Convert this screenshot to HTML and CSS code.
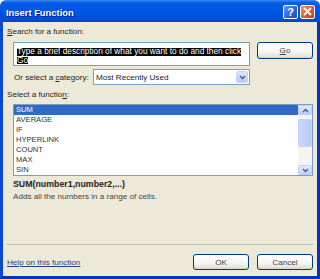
FILE: index.html
```html
<!DOCTYPE html>
<html lang="en">
<head>
  <meta charset="UTF-8" />
  <meta name="viewport" content="width=device-width, initial-scale=1" />
  <title>Insert Function</title>
  <link rel="stylesheet" href="styles.css">
</head>
<body>
  <div class="window">
    <div class="titlebar">
      <span class="title">Insert Function</span>
      <div class="caption-buttons">
        <span class="cap-btn help">?</span>
        <span class="cap-btn close">
          <svg width="9" height="9" viewBox="0 0 9 9"><path d="M1 1 L8 8 M8 1 L1 8" stroke="#fff" stroke-width="1.8" /></svg>
        </span>
      </div>
    </div>

    <div class="frame">
      <div class="label"><u>S</u>earch for a function:</div>

      <div class="search-row">
        <div class="search-box">
          <span class="selected">Type a brief description of what you want to do and then click</span><br>
          <span class="selected">Go</span>
        </div>
        <div class="button go"><u>G</u>o</div>
      </div>

      <div class="category-row">
        <span class="cat-label">Or select a <u>c</u>ategory:</span>
        <div class="select">
          <span class="select-text">Most Recently Used</span>
          <span class="drop">
            <svg width="7" height="5" viewBox="0 0 7 5"><path d="M1 1 L3.5 3.5 L6 1" fill="none" stroke="#4d6185" stroke-width="1.5" /></svg>
          </span>
        </div>
      </div>

      <div class="label">Select a functio<u>n</u>:</div>

      <div class="listbox">
        <ul class="items">
          <li class="active">SUM</li>
          <li>AVERAGE</li>
          <li>IF</li>
          <li>HYPERLINK</li>
          <li>COUNT</li>
          <li>MAX</li>
          <li>SIN</li>
        </ul>
        <div class="scrollbar">
          <span class="arrow">
            <svg width="7" height="5" viewBox="0 0 7 5"><path d="M1 4 L3.5 1.5 L6 4" fill="none" stroke="#4d6185" stroke-width="1.5" /></svg>
          </span>
          <span class="track"><span class="thumb"></span></span>
          <span class="arrow">
            <svg width="7" height="5" viewBox="0 0 7 5"><path d="M1 1 L3.5 3.5 L6 1" fill="none" stroke="#4d6185" stroke-width="1.5" /></svg>
          </span>
        </div>
      </div>

      <div class="signature">SUM(number1,number2,...)</div>
      <div class="description">Adds all the numbers in a range of cells.</div>

      <div class="spacer"></div>
      <div class="separator"></div>

      <div class="footer">
        <a class="help-link" href="#">Help on this function</a>
        <div class="buttons">
          <div class="button">OK</div>
          <div class="button">Cancel</div>
        </div>
      </div>
    </div>
  </div>
</body>
</html>
```

FILE: styles.css
```css
html, body {
  margin: 0;
  padding: 0;
  background: #fff;
}

body {
  font-family: 'Liberation Sans', Arial, sans-serif;
  font-size: 8.1px;
  color: #000;
}

.window {
  width: 320px;
  height: 279px;
  display: flex;
  flex-direction: column;
}

/* title bar */
.titlebar {
  height: 22px;
  flex: none;
  display: flex;
  align-items: center;
  justify-content: space-between;
  padding: 0 5px 0 6px;
  box-sizing: border-box;
  border-radius: 6px 6px 0 0;
  background: linear-gradient(#3d8cf5 0%, #0a5ee6 12%, #0058e6 30%, #0054e3 60%, #004ed8 85%, #0045c5 100%);
}

.title {
  color: #fff;
  font-weight: bold;
  font-size: 9.4px;
  padding-top: 2px;
  text-shadow: 1px 1px 0 #0a1a8a;
}

.caption-buttons {
  display: flex;
  gap: 2px;
  padding-top: 1px;
}

.cap-btn {
  width: 15px;
  height: 14px;
  box-sizing: border-box;
  border: 1px solid #fff;
  border-radius: 2px;
  display: flex;
  align-items: center;
  justify-content: center;
  color: #fff;
  font-weight: bold;
  font-size: 11px;
}

.help {
  background: linear-gradient(135deg, #5f95f8, #2a62e0 60%, #1d4fcf);
}

.close {
  background: linear-gradient(135deg, #f0926e, #e25a2e 55%, #c8401b);
}

/* dialog body */
.frame {
  flex: 1;
  display: flex;
  flex-direction: column;
  background: #ece9d8;
  border-left: 3px solid #0a49d8;
  border-right: 3px solid #0833b8;
  border-bottom: 3px solid #0833b8;
  padding: 0 4px 6px 4px;
}

.label {
  line-height: 10px;
  margin-top: 5px;
  color: #222;
}

.label + .listbox {
  margin-top: 4px;
}

.label:nth-of-type(2) {
  margin-top: 8px;
}

.search-row {
  display: flex;
  align-items: flex-start;
  gap: 7px;
  margin-top: 5px;
  padding-left: 6px;
}

.search-box {
  width: 237px;
  height: 24px;
  box-sizing: border-box;
  background: #fff;
  border: 1px solid #7f9db9;
  padding: 4px 1px 0 3px;
  font-size: 8.3px;
  line-height: 8.3px;
  overflow: hidden;
}

.selected {
  display: inline-block;
  white-space: nowrap;
  line-height: 7.6px;
  height: 7.6px;
  background: #000;
  color: #fff;
}

.button {
  height: 16px;
  box-sizing: border-box;
  border: 1px solid #003c74;
  border-radius: 3px;
  background: linear-gradient(#ffffff, #f4f4f0 60%, #e3e0d6 90%, #d6d0c5);
  display: flex;
  align-items: center;
  justify-content: center;
  color: #444;
}

.go {
  width: 56px;
  height: 17px;
}

.category-row {
  display: flex;
  align-items: center;
  margin-top: 3px;
  padding-left: 7px;
  height: 16px;
  color: #222;
}

.cat-label {
  width: 79px;
}

.select {
  width: 157px;
  height: 16px;
  box-sizing: border-box;
  background: #fff;
  border: 1px solid #7f9db9;
  display: flex;
  align-items: center;
  justify-content: space-between;
  padding: 0 1px 0 2px;
}

.drop {
  width: 12px;
  height: 12px;
  box-sizing: border-box;
  border: 1px solid #c3d3fd;
  border-radius: 2px;
  background: linear-gradient(#dbe6fe, #b9cdf9);
  display: flex;
  align-items: center;
  justify-content: center;
}

/* function list */
.listbox {
  margin-left: 6px;
  height: 72px;
  box-sizing: border-box;
  border: 1px solid #7f9db9;
  background: #fff;
  display: flex;
}

.items {
  list-style: none;
  margin: 0;
  padding: 0;
  flex: 1;
}

.items li {
  height: 10px;
  line-height: 10px;
  padding-left: 2px;
  font-size: 7.6px;
  color: #333;
}

.items li.active {
  background: #316ac5;
  color: #fff;
}

.scrollbar {
  width: 14px;
  display: flex;
  flex-direction: column;
  background: #f5f4ef;
}

.arrow {
  height: 10px;
  flex: none;
  box-sizing: border-box;
  border: 1px solid #bdd0f8;
  border-radius: 2px;
  background: linear-gradient(#e3ebfd, #bccffa);
  display: flex;
  align-items: center;
  justify-content: center;
}

.track {
  flex: 1;
  padding-top: 4px;
}

.thumb {
  display: block;
  height: 28px;
  box-sizing: border-box;
  border: 1px solid #bdd0f8;
  border-radius: 2px;
  background: linear-gradient(90deg, #c9d8fc, #b6cbf8);
}

.signature {
  margin-top: 3px;
  padding-left: 6px;
  line-height: 10px;
  font-weight: bold;
  font-size: 8.8px;
  color: #222;
}

.description {
  margin-top: 3px;
  padding-left: 6px;
  line-height: 10px;
  color: #444;
}

.spacer {
  flex: 1;
}

.separator {
  height: 1px;
  background: #c8c5b5;
  margin-bottom: 9px;
}

.footer {
  display: flex;
  align-items: center;
  justify-content: space-between;
}

.help-link {
  color: #2a3f7a;
  text-decoration: underline;
}

.buttons {
  display: flex;
  gap: 8px;
}

.buttons .button {
  width: 56px;
}
```
